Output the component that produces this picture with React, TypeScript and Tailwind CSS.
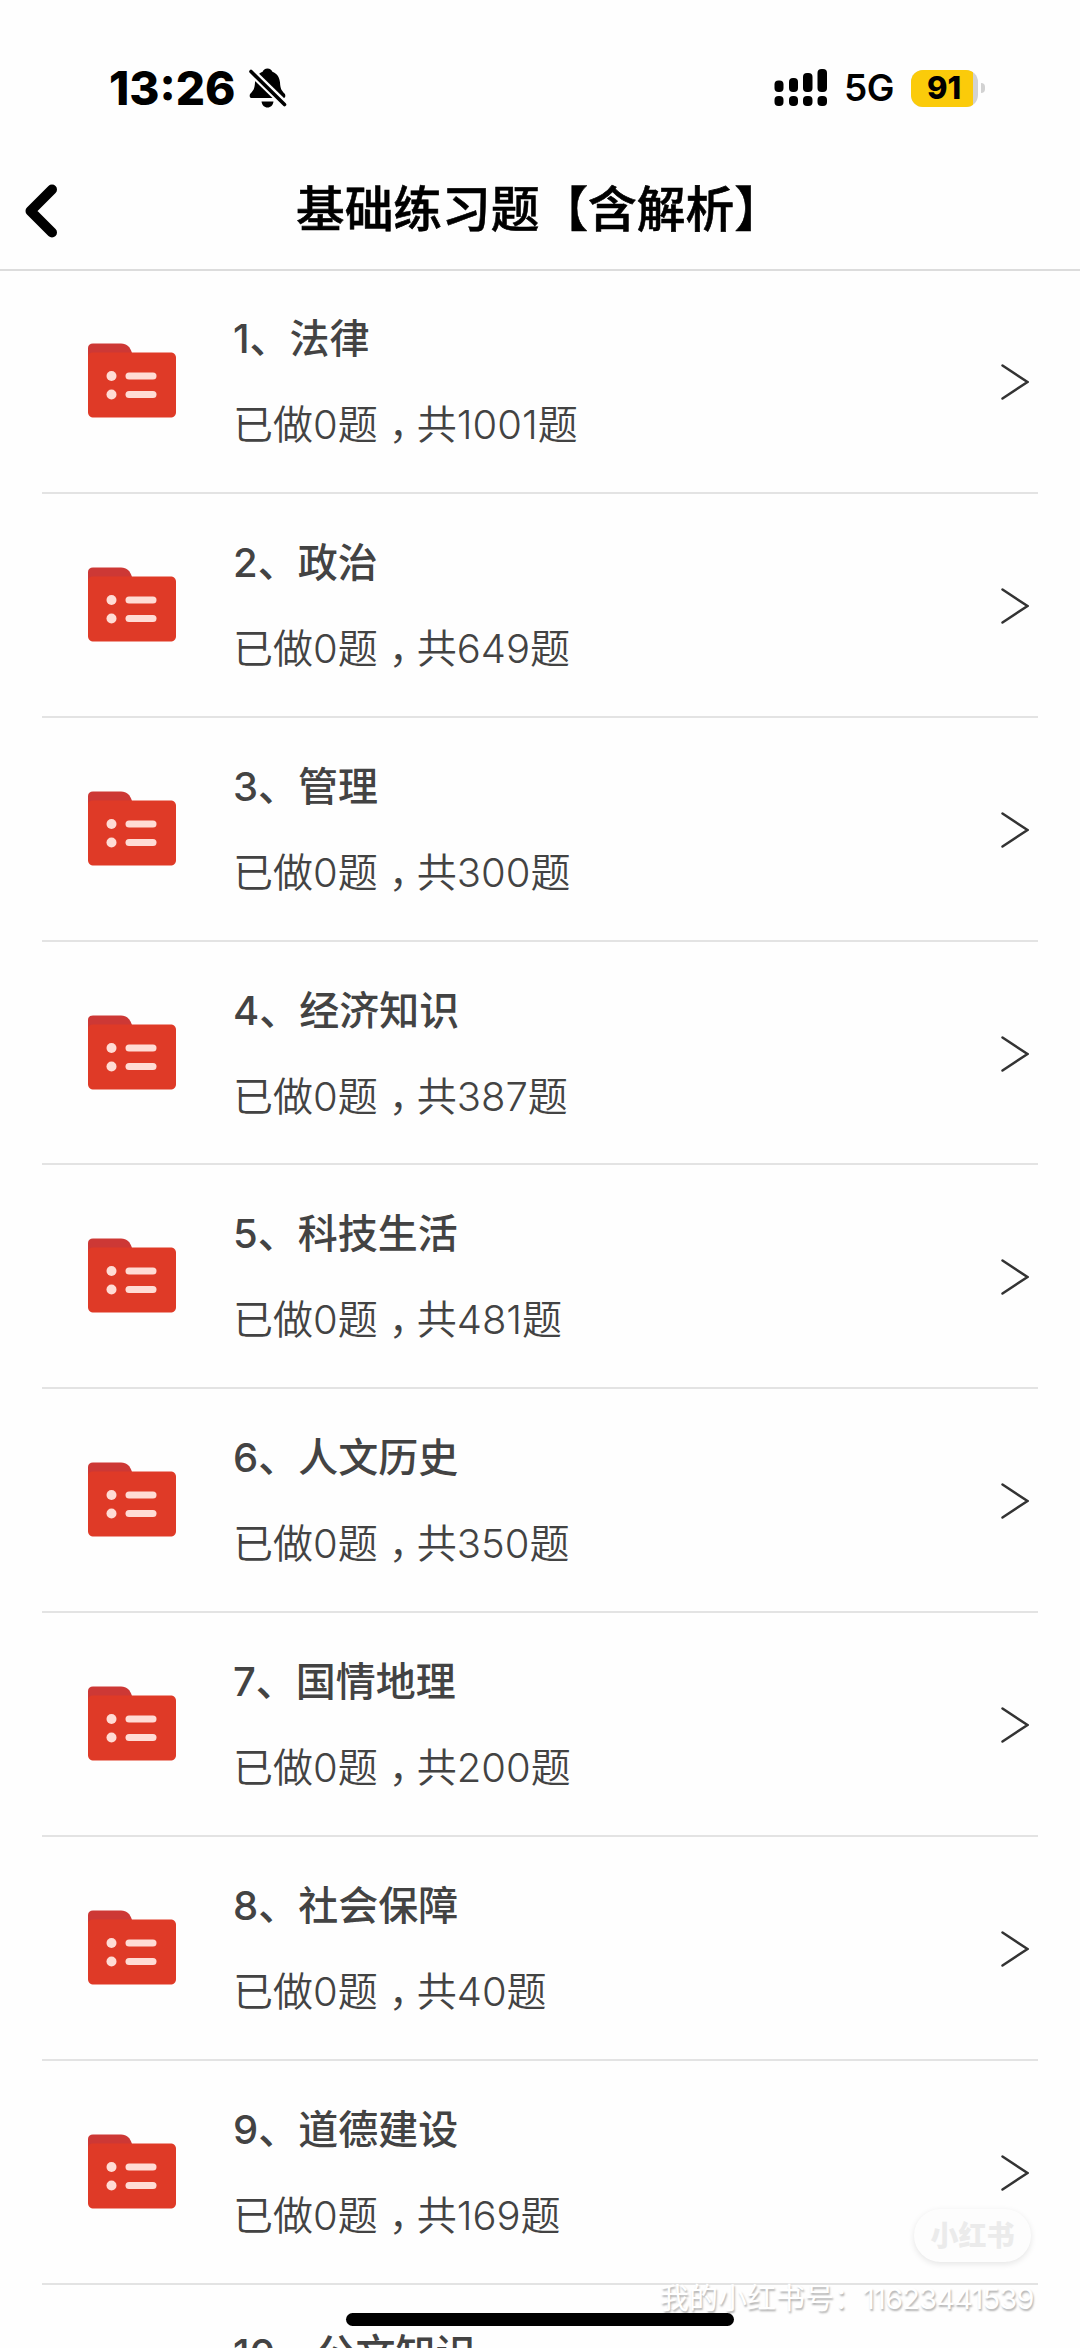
type Subject = {
  title: string
  done: number
  total: number
}

const subjects: Subject[] = [
  { title: "法律", done: 0, total: 1001 },
  { title: "政治", done: 0, total: 649 },
  { title: "管理", done: 0, total: 300 },
  { title: "经济知识", done: 0, total: 387 },
  { title: "科技生活", done: 0, total: 481 },
  { title: "人文历史", done: 0, total: 350 },
  { title: "国情地理", done: 0, total: 200 },
  { title: "社会保障", done: 0, total: 40 },
  { title: "道德建设", done: 0, total: 169 },
  { title: "公文知识", done: 0, total: 200 },
]

function BellOffIcon() {
  return (
    <svg width="38" height="40" viewBox="0 0 38 40" className="absolute left-[249px] top-[68px]">
      <path
        d="M18.500 0.500C21 0.500 22.700 1.800 23.400 3.800C28 5.500 30.600 9.500 31 14.500C31.300 20.500 32.500 22.500 35.500 25.500C37 27.100 36.500 30 34 30H3C0.500 30 0 27.100 1.500 25.500C4.500 22.500 5.700 20.500 6 14.500C6.300 9.500 9 5.500 13.600 3.800C14.300 1.800 16 0.500 18.500 0.500Z"
        fill="#000"
      />
      <path d="M12.500 33.500H24.500C24 37.300 21.700 39.500 18.500 39.500S13 37.300 12.500 33.500Z" fill="#000" />
      <path d="M-1 0.500L38 38.500" stroke="#fefefe" strokeWidth="8" />
      <path d="M2 3.500L35.500 36.500" stroke="#000" strokeWidth="3.600" strokeLinecap="round" />
    </svg>
  )
}

function SignalIcon() {
  return (
    <svg width="54" height="38" viewBox="0 0 54 38">
      <rect x="0.500" y="11.500" width="9" height="11.500" rx="4" />
      <rect x="15" y="9" width="9" height="14" rx="4" />
      <rect x="29" y="4" width="9.500" height="19" rx="4" />
      <rect x="43.500" y="0" width="9.500" height="23" rx="4" />
      <rect x="0.500" y="27" width="9" height="10" rx="4" />
      <rect x="15" y="27" width="9" height="10" rx="4" />
      <rect x="29" y="27" width="9.500" height="10" rx="4" />
      <rect x="43.500" y="27" width="9.500" height="10" rx="4" />
    </svg>
  )
}

function FolderIcon() {
  return (
    <svg width="88" height="76" viewBox="0 0 88 76">
      <path d="M0 5C0 2 2 0.500 5 0.500H33C39 0.500 42 4 44 10V30H0Z" fill="#cd3835" />
      <path
        d="M0 14C0 11 2 9.500 5 9.500H82C86 9.500 88 11.500 88 15V69C88 72.500 86 74.500 82 74.500H6C2 74.500 0 72.500 0 69Z"
        fill="#df3a27"
      />
      <circle cx="23.500" cy="33" r="5" fill="#ffdcd5" />
      <circle cx="23.500" cy="51.500" r="5" fill="#ffdcd5" />
      <rect x="37.500" y="29.500" width="31" height="7" rx="3.500" fill="#ffdcd5" />
      <rect x="37.500" y="48" width="31" height="7" rx="3.500" fill="#ffdcd5" />
    </svg>
  )
}

function StatusBar() {
  return (
    <div className="flex h-[150px] shrink-0 items-start pl-[109px] pr-[95px] pt-[68px]">
      <span className="text-[46px] font-extrabold leading-[40px]">13:26</span>
      <BellOffIcon />
      <div className="ml-auto flex items-center">
        <SignalIcon />
        <span className="ml-[16px] text-[37px] font-semibold leading-[40px] tracking-[-0.5px]">5G</span>
        <div className="ml-[17px] flex h-[37px] w-[67px] items-center overflow-hidden rounded-[12px] bg-[#d2d2d2]">
          <span className="flex h-full w-[62px] items-center justify-center bg-[#fbcb0a] pl-[4px] text-[31px] font-extrabold">
            91
          </span>
        </div>
        <div className="ml-[3px] h-[10px] w-[4px] rounded-r-full bg-[#d2d2d2]" />
      </div>
    </div>
  )
}

function SubjectRow({ subject, index }: { subject: Subject; index: number }) {
  return (
    <li className="flex h-[223.870px] shrink-0 border-b-2 border-[#e3e3e3] pl-[46px] pr-[9px]">
      <div className="pt-[73px]">
        <FolderIcon />
      </div>

      <div className="ml-[57px] whitespace-nowrap pt-[39px] text-[40px] leading-[60px] text-[#434343]">
        <h2 className="font-medium">
          {index}、{subject.title}
        </h2>
        <p className="mt-[26px] font-[350]">
          已做{subject.done}题
          <span className="pl-[11px] tracking-[-12px]">，</span>
          共{subject.total}题
        </p>
      </div>

      <svg width="28" height="36" viewBox="0 0 28 36" className="ml-auto mt-[94px]" fill="none">
        <path d="M1.500 1.500L26.500 18L1.500 34.500" stroke="#333" strokeWidth="2.500" strokeLinecap="round" />
      </svg>
    </li>
  )
}

export default function App() {
  return (
    <div className="relative flex h-[2348px] w-[1080px] flex-col overflow-hidden bg-[#fefefe] font-['Inter','Noto_Sans_CJK_SC',sans-serif] text-black">
      <StatusBar />

      {/* Title bar */}
      <header className="flex h-[121px] shrink-0 items-start border-b-2 border-[#dcdcdc] pl-[25px]">
        <svg width="33" height="54" viewBox="0 0 33 54" className="mt-[34px]" fill="none">
          <path
            d="M27 5.500L5.500 27L27 48.500"
            stroke="#000"
            strokeWidth="10"
            strokeLinecap="round"
            strokeLinejoin="round"
          />
        </svg>
        <h1 className="ml-[238px] mt-[24px] whitespace-nowrap text-[48.700px] font-medium leading-[72px] [-webkit-text-stroke:0.600px_#000]">
          基础练习题【含解析】
        </h1>
      </header>

      {/* Subject list */}
      <ul className="-mt-px flex flex-col pl-[42px] pr-[42px]">
        {subjects.map((subject, i) => (
          <SubjectRow key={subject.title} subject={subject} index={i + 1} />
        ))}
      </ul>

      {/* Watermark */}
      <div className="absolute left-[914px] top-[2209px] flex h-[53px] w-[117px] items-center justify-center rounded-full bg-[#fdfdfd] text-[28px] font-black text-[#ebebeb] shadow-[0_2px_6px_rgba(0,0,0,0.10)]">
        小红书
      </div>
      <div className="absolute left-[660px] top-[2277px] whitespace-nowrap text-[29px] leading-[44px] text-white [text-shadow:1px_2px_2px_rgba(0,0,0,0.3)]">
        我的小红书号：<span className="tracking-[-0.800px]">11623441539</span>
      </div>

      {/* Home indicator */}
      <div className="absolute left-[346px] top-[2313px] h-[13px] w-[388px] rounded-full bg-black" />
    </div>
  )
}
